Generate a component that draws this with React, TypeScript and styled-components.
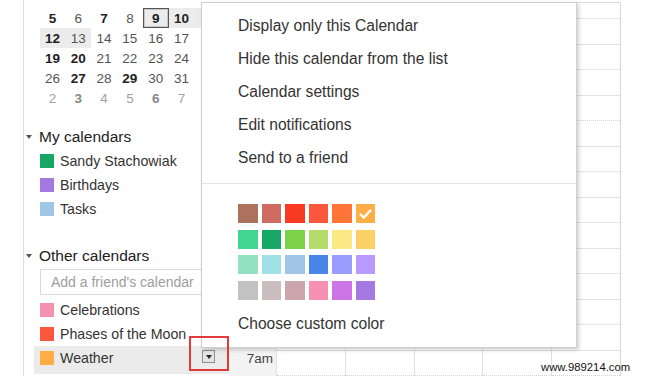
import React from 'react';
import styled, { createGlobalStyle } from 'styled-components';

const Global = createGlobalStyle`
  html, body { margin: 0; padding: 0; background: #fff; }
  body { font-family: "Liberation Sans", Arial, sans-serif; color: #222; }
`;

// last column (11, 18, ...) sits under the menu, only its highlight peeks out
const weeks = [
  [5, 6, 7, 8, 9, 10, 11],
  [12, 13, 14, 15, 16, 17, 18],
  [19, 20, 21, 22, 23, 24, 25],
  [26, 27, 28, 29, 30, 31, 1],
  [2, 3, 4, 5, 6, 7, 8],
];
const boldDays = [5, 7, 9, 10, 12, 19, 20, 27, 29];
const boldNext = [3, 6];
const rangeDays = [10, 11, 12, 13];

const palette = [
  ['#ac725e', '#d06b64', '#f83a22', '#fa573c', '#ff7537', '#ffad46'],
  ['#42d692', '#16a765', '#7bd148', '#b3dc6c', '#fbe983', '#fad165'],
  ['#92e1c0', '#9fe1e7', '#9fc6e7', '#4986e7', '#9a9cff', '#b99aff'],
  ['#c2c2c2', '#cabdbf', '#cca6ac', '#f691b2', '#cd74e6', '#a47ae2'],
];

const menuItems = [
  'Display only this Calendar',
  'Hide this calendar from the list',
  'Calendar settings',
  'Edit notifications',
  'Send to a friend',
];

// first slot is the part of the night that is scrolled in, then half hours down to 7am
const slots = Array.from({ length: 15 }, (_, k) => ({ h: k === 0 ? 16 : 25.5, half: k % 2 === 0 }));

export default function App() {
  return <Page>
    <Global />
    <Sidebar>
      <MiniCal>
        {weeks.map((week, w) => week.map((d, i) => {
          const next = w === 4 || (w === 3 && i === 6);
          return <Day key={`${w}-${i}`}
            $muted={next}
            $bold={next ? boldNext.includes(d) : boldDays.includes(d)}
            $range={!next && rangeDays.includes(d)}
            $today={!next && d === 9}>{i < 6 ? d : ''}</Day>
        }))}
      </MiniCal>

      <SectionHead $gap={16}><Caret />My calendars</SectionHead>
      <CalRow><Swatch $c='#16a765' />Sandy Stachowiak</CalRow>
      <CalRow><Swatch $c='#a47ae2' />Birthdays</CalRow>
      <CalRow><Swatch $c='#9fc6e7' />Tasks</CalRow>

      <SectionHead $gap={22}><Caret />Other calendars</SectionHead>
      <FriendInput placeholder="Add a friend's calendar" readOnly />
      <CalList>
        <CalRow><Swatch $c='#f691b2' />Celebrations</CalRow>
        <CalRow><Swatch $c='#fa573c' />Phases of the Moon</CalRow>
        <CalRow $active><Swatch $c='#ffad46' />Weather<DropBtn /></CalRow>
      </CalList>
    </Sidebar>

    <Main>
      <Gutter>
        {slots.map((s, k) => <Slot key={k} $h={s.h} $half={s.half} $plain>
          {k === 14 && <HourLabel>7am</HourLabel>}
        </Slot>)}
      </Gutter>
      <Columns>
        {[0, 1, 2, 3, 4].map(c => <DayCol key={c}>
          {slots.map((s, k) => <Slot key={k} $h={s.h} $half={s.half} />)}
        </DayCol>)}
      </Columns>
    </Main>

    <Menu>
      {menuItems.map(t => <MenuItem key={t}>{t}</MenuItem>)}
      <Divider />
      <Palette>
        {palette.flat().map(c => <Chip key={c} $c={c}>
          {c === '#ffad46' && <svg width='19' height='19' viewBox='0 0 19 19'>
            <path d='M4 10 L7.8 13.6 L15 5.8' fill='none' stroke='#fff' strokeWidth='2.4' />
          </svg>}
        </Chip>)}
      </Palette>
      <MenuItem>Choose custom color</MenuItem>
    </Menu>

    <Highlight />
    <Watermark>www.989214.com</Watermark>
  </Page>
}

const Page = styled.div`
  position: relative;
  width: 647px; height: 376px;
  overflow: hidden;
  display: flex;
  padding-left: 23px;
  box-sizing: border-box;
`

const Sidebar = styled.div`
  flex: none;
  width: 205px;
  border-left: 1px solid #dcdcdc;
  box-sizing: border-box;
  display: flex;
  flex-direction: column;
`

const MiniCal = styled.div`
  display: grid;
  grid-template-columns: repeat(7, 25.8px);
  grid-auto-rows: 20px;
  padding: 8px 0 0 15.6px;
`

const Day = styled.div<{ $bold?: boolean; $muted?: boolean; $range?: boolean; $today?: boolean }>`
  display: flex; align-items: center; justify-content: center;
  font-size: 13.5px;
  font-weight: ${p => p.$bold ? 700 : 400};
  color: ${p => p.$muted ? (p.$bold ? '#888' : '#a0a0a0') : p.$bold ? '#222' : '#555'};
  background: ${p => p.$range || p.$today ? '#ececec' : 'transparent'};
  box-shadow: ${p => p.$today ? 'inset 0 0 0 1px #555, inset 0 0 0 2px #c4c4c4' : 'none'};
`

const SectionHead = styled.div<{ $gap: number }>`
  display: flex; align-items: center; gap: 7px;
  height: 25px;
  margin-top: ${p => p.$gap}px;
  padding-left: 2px;
  font-size: 15.5px; color: #222;
`

const Caret = styled.span`
  width: 0; height: 0;
  border-left: 3.5px solid transparent;
  border-right: 3.5px solid transparent;
  border-top: 4px solid #555;
`

const CalList = styled.div`
  margin-top: 3px;
`

const CalRow = styled.div<{ $active?: boolean }>`
  display: flex; align-items: center; gap: 6px;
  height: 24px;
  margin-left: 10px;
  padding: 0 13px ${p => p.$active ? 4 : 0}px 6px;
  background: ${p => p.$active ? '#ebebeb' : 'transparent'};
  font-size: 14.2px; color: #333;
  white-space: nowrap;
`

const Swatch = styled.span<{ $c: string }>`
  flex: none;
  width: 14px; height: 14px;
  background: ${p => p.$c};
`

const DropBtn = styled.span`
  margin-left: auto; margin-bottom: 3px;
  width: 13px; height: 13px;
  box-sizing: border-box;
  border: 1px solid #8f8f8f;
  background: #e4e4e4;
  display: flex; align-items: center; justify-content: center;
  &::after {
    content: '';
    border-left: 3.5px solid transparent;
    border-right: 3.5px solid transparent;
    border-top: 4px solid #222;
  }
`

const FriendInput = styled.input`
  margin: 1px 0 0 16px;
  width: 190px; height: 26px;
  box-sizing: border-box;
  border: 1px solid #d9d9d9;
  padding: 0 10px;
  font: 14px "Liberation Sans", Arial, sans-serif;
  outline: none;
  &::placeholder { color: #9e9e9e; }
`

const Main = styled.div`
  flex: none;
  display: flex;
  align-self: flex-start;
  margin-top: 2px;
  height: 374px;
  border-top: 1px solid #dadada;
`

const Gutter = styled.div`
  width: 48px;
  background: #f3f3f3;
  display: flex; flex-direction: column;
`

const Columns = styled.div`
  display: flex;
  border-right: 1px solid #d8d8d8;
`

const DayCol = styled.div`
  width: 68.8px;
  box-sizing: border-box;
  border-left: 1px solid #e2e2e2;
  display: flex; flex-direction: column;
`

const Slot = styled.div<{ $h: number; $half: boolean; $plain?: boolean }>`
  flex: none;
  height: ${p => p.$h}px;
  box-sizing: border-box;
  border-bottom: ${p => p.$plain ? 'none' : p.$half ? '1px dotted #d2d2d2' : '1px solid #e2e2e2'};
`

const HourLabel = styled.div`
  text-align: right;
  padding-right: 3px;
  font-size: 13.5px; line-height: 15px; color: #444;
`

const Menu = styled.div`
  position: absolute;
  left: 201px; top: 2px;
  width: 376px; height: 346px;
  box-sizing: border-box;
  background: #fff;
  border: 1px solid #cfcfcf;
  box-shadow: 2px 2px 4px rgba(0, 0, 0, .18);
  padding-top: 5.5px;
  font-size: 15.6px; color: #333;
`

const MenuItem = styled.div`
  height: 33px; line-height: 33px;
  padding-left: 36px;
  white-space: nowrap;
`

const Divider = styled.div`
  margin-top: 9.5px;
  height: 1px;
  background: #e5e5e5;
`

const Palette = styled.div`
  display: grid;
  grid-template-columns: repeat(6, 19.5px);
  grid-auto-rows: 19px;
  column-gap: 4.1px;
  row-gap: 6.5px;
  margin: 20px 0 7px 36px;
`

const Chip = styled.div<{ $c: string }>`
  background: ${p => p.$c};
  display: flex; align-items: center; justify-content: center;
`

const Highlight = styled.div`
  position: absolute;
  left: 189px; top: 336px;
  width: 40px; height: 35px;
  box-sizing: border-box;
  border: 2.5px solid #e2393b;
`

const Watermark = styled.div`
  position: absolute;
  left: 541px; top: 361px;
  font-size: 11.3px; line-height: 13px;
  color: #111;
`
